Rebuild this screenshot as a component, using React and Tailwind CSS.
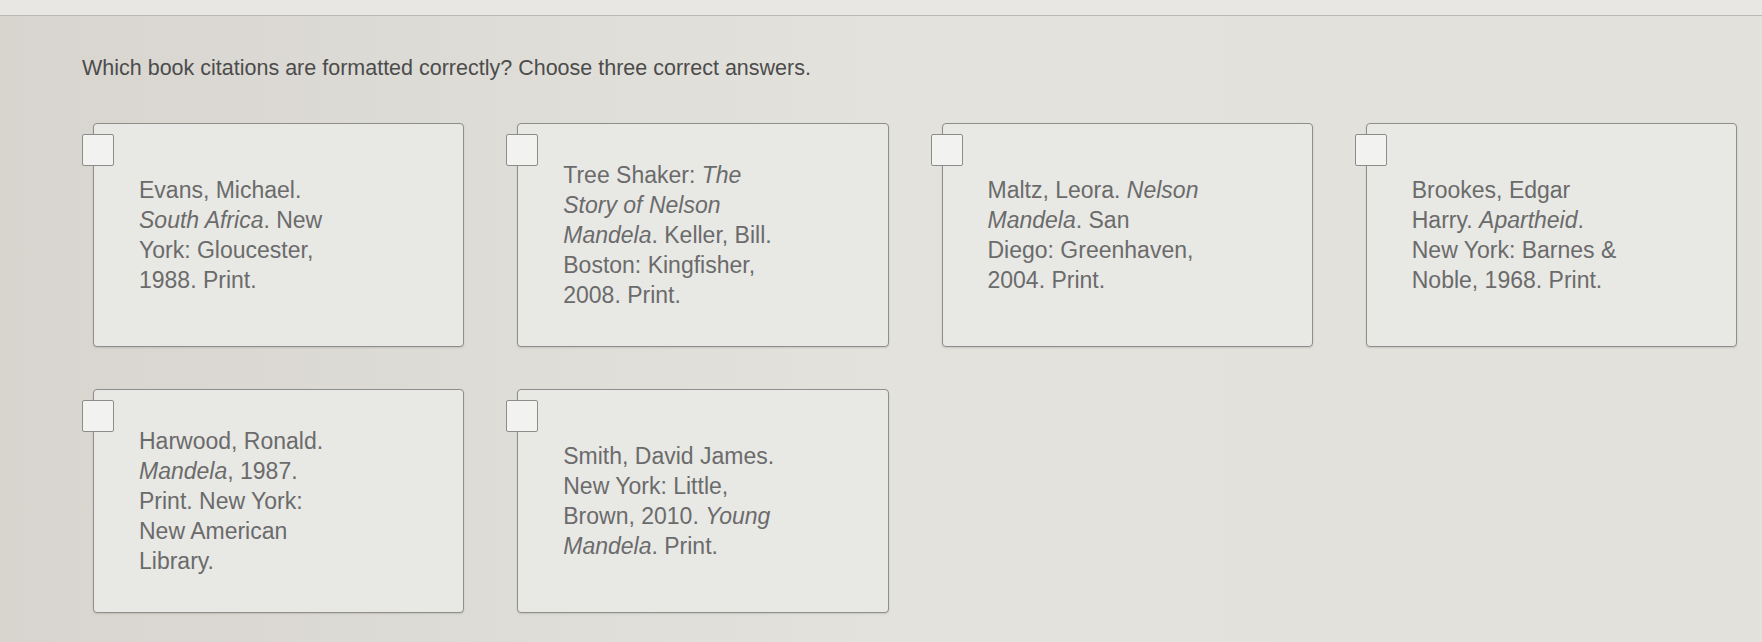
import React from 'react';

const citations = [
  [
    [['Evans, Michael.']],
    [['South Africa', true], ['. New']],
    [['York: Gloucester,']],
    [['1988. Print.']],
  ],
  [
    [['Tree Shaker: '], ['The', true]],
    [['Story of Nelson', true]],
    [['Mandela', true], ['. Keller, Bill.']],
    [['Boston: Kingfisher,']],
    [['2008. Print.']],
  ],
  [
    [['Maltz, Leora. '], ['Nelson', true]],
    [['Mandela', true], ['. San']],
    [['Diego: Greenhaven,']],
    [['2004. Print.']],
  ],
  [
    [['Brookes, Edgar']],
    [['Harry. '], ['Apartheid', true], ['.']],
    [['New York: Barnes &']],
    [['Noble, 1968. Print.']],
  ],
  [
    [['Harwood, Ronald.']],
    [['Mandela', true], [', 1987.']],
    [['Print. New York:']],
    [['New American']],
    [['Library.']],
  ],
  [
    [['Smith, David James.']],
    [['New York: Little,']],
    [['Brown, 2010. '], ['Young', true]],
    [['Mandela', true], ['. Print.']],
  ],
];

function AnswerCard({ lines }) {
  return (
    <label className="relative flex h-[224px] items-center rounded-[4px] border-[1.5px] border-[#8e8e8c] bg-[#e8e8e5] pl-[45px] shadow-[0_1px_2px_rgba(0,0,0,0.12)]">
      <span className="absolute left-[-12px] top-[10px] h-[32px] w-[32px] rounded-[2px] border-[1.5px] border-[#8c8c8a] bg-[#f2f2f0]" />
      <div className="text-[23px] leading-[30px] text-[#6b6b6b]">
        {lines.map((line, i) => (
          <div key={i} className="whitespace-nowrap">
            {line.map(([text, italic], j) => (
              <span key={j} className={italic ? 'italic' : ''}>
                {text}
              </span>
            ))}
          </div>
        ))}
      </div>
    </label>
  );
}

export default function App() {
  return (
    <div
      className="h-[642px] w-full overflow-hidden bg-gradient-to-r from-[#d8d5cf] via-[#e3e2dd] to-[#e2e1dc]"
      style={{ fontFamily: '"Liberation Sans", Arial, sans-serif' }}
    >
      <div className="h-[16px] border-b border-[#b9b9b6] bg-[#e8e7e4]" />
      <main className="pl-[93px] pr-[25px]">
        <p className="ml-[-11px] mt-[40px] text-[21.5px] leading-[24px] text-[#4c4c4c]">
          Which book citations are formatted correctly? Choose three correct answers.
        </p>
        <div className="mt-[43px] grid grid-cols-4 gap-x-[53px] gap-y-[42px]">
          {citations.map((lines, i) => (
            <AnswerCard key={i} lines={lines} />
          ))}
        </div>
      </main>
    </div>
  );
}
